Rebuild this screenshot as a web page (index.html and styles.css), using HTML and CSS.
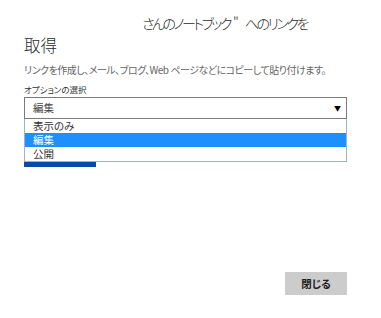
FILE: index.html
```html
<!DOCTYPE html>
<html lang="ja">
<head>
  <meta charset="UTF-8">
  <title>リンクを取得</title>
  <link rel="stylesheet" href="styles.css">
</head>
<body>
  <div class="dialog">
    <h1 class="title">
      <span class="title-1"><span class="owner"></span>さんのノートブック<span class="quote">"</span>へのリンクを</span>
      <span class="title-2">取得</span>
    </h1>
    <p class="desc">リンクを作成し、メール、ブログ、Web ページなどにコピーして貼り付けます。</p>
    <div class="label">オプションの選択</div>
    <div class="select-wrap">
      <div class="select">
        <span>編集</span>
        <span class="arrow">▼</span>
      </div>
      <ul class="options">
        <li>表示のみ</li>
        <li class="selected">編集</li>
        <li>公開</li>
      </ul>
      <div class="progress"></div>
    </div>
    <div class="actions">
      <button class="btn">閉じる</button>
    </div>
  </div>
</body>
</html>
```
FILE: styles.css
```css
body {
  margin: 0;
  padding: 0;
  background: #fff;
  font-family: "Noto Sans CJK JP", "Noto Sans", sans-serif;
  font-feature-settings: "palt";
  color: #333;
}

.dialog {
  padding: 12px 34px 0 24px;
  height: 318px;
  box-sizing: border-box;
}

.title {
  margin: 0;
  font-weight: 300;
  line-height: 22px;
  color: #2a2a2a;
  white-space: nowrap;
}

.title-1,
.title-2 {
  display: block;
}

.title-1 {
  font-size: 14px;
  letter-spacing: -2.5px;
}

.title-1 .quote {
  margin: 0 6px 0 3px;
  letter-spacing: 0;
}

.title-2 {
  font-size: 16.5px;
  letter-spacing: 0;
}

.owner {
  display: inline-block;
  width: 118px;
}

.desc {
  margin: 7px 0 0;
  font-size: 10px;
  letter-spacing: -0.5px;
  line-height: 14px;
  color: #666;
  white-space: nowrap;
}

.label {
  margin-top: 6px;
  font-size: 8.5px;
  line-height: 12px;
  color: #333;
}

.select-wrap {
  margin-top: 2px;
}

.select {
  height: 20px;
  border: 1px solid #7a7a7a;
  display: flex;
  align-items: center;
  justify-content: space-between;
  padding: 0 5px 0 8px;
  font-size: 10.5px;
  line-height: 14px;
  color: #444;
}

.arrow {
  font-size: 7px;
  color: #000;
}

.options {
  list-style: none;
  margin: 0;
  padding: 0;
  border: 1px solid #9fb3c8;
  border-top: none;
  font-size: 10.5px;
  color: #333;
}

.options li {
  height: 14px;
  line-height: 13px;
  padding-left: 8px;
}

.options li.selected {
  background: #1e8fff;
  color: #fff;
}

.progress {
  width: 72px;
  height: 5px;
  background: #0a4aa6;
}

.actions {
  display: flex;
  justify-content: flex-end;
  margin-top: 105px;
}

.btn {
  width: 62px;
  height: 23px;
  border: none;
  background: #cccccc;
  font-family: "Noto Sans CJK JP", sans-serif;
  font-feature-settings: "palt";
  font-size: 10.5px;
  font-weight: bold;
  color: #222;
  padding: 0;
}
```
